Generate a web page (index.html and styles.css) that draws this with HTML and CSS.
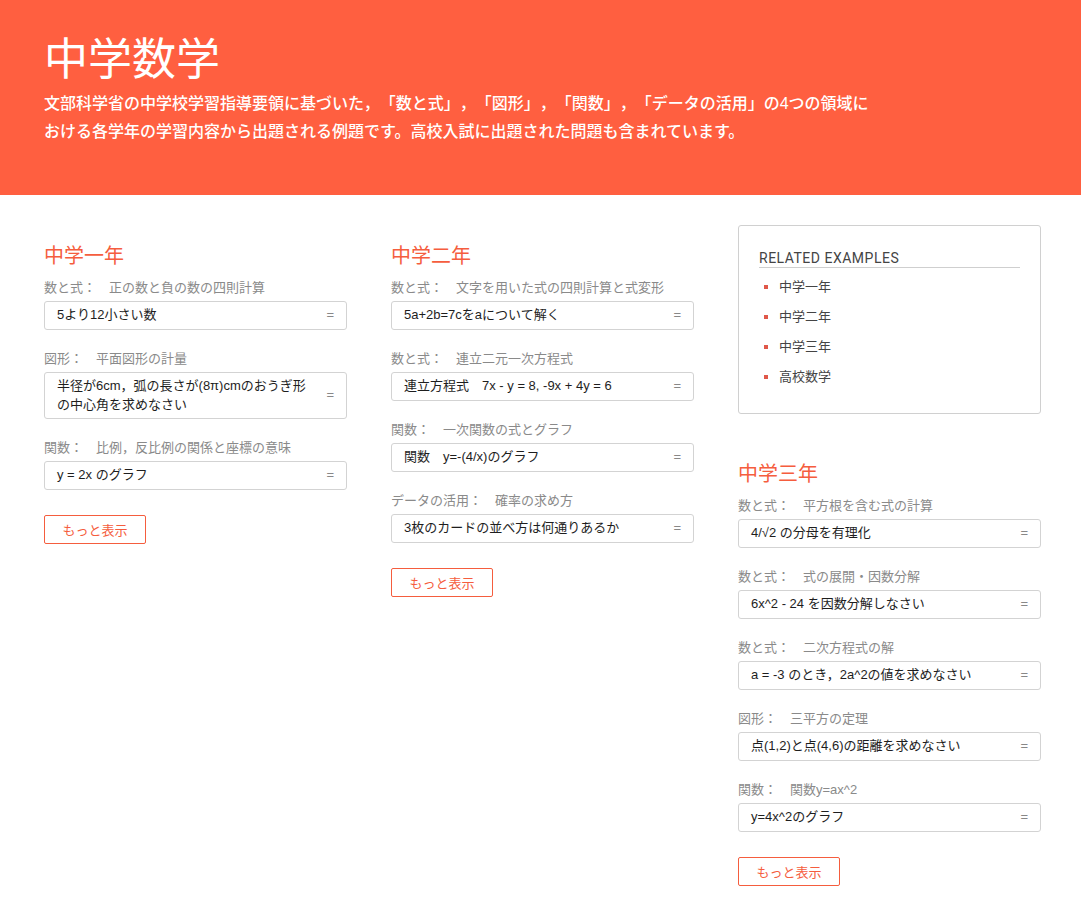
FILE: index.html
```html
<!DOCTYPE html>
<html lang="ja">
<head>
<meta charset="utf-8">
<title>中学数学</title>
<link rel="stylesheet" href="styles.css">
</head>
<body>
<header class="hero">
  <h1 class="hero-title">中学数学</h1>
  <p class="hero-desc">文部科学省の中学校学習指導要領に基づいた，「数と式」，「図形」，「関数」，「データの活用」の4つの領域に<br>おける各学年の学習内容から出題される例題です。高校入試に出題された問題も含まれています。</p>
</header>
<main class="grid">
  <section class="col">
    <h2 class="grade">中学一年</h2>
    <div class="item">
      <div class="label"><span class="cat">数と式：</span>正の数と負の数の四則計算</div>
      <div class="box"><span class="q">5より12小さい数</span><span class="eq">=</span></div>
    </div>
    <div class="item">
      <div class="label"><span class="cat">図形：</span>平面図形の計量</div>
      <div class="box"><span class="q">半径が6cm，弧の長さが(8π)cmのおうぎ形の中心角を求めなさい</span><span class="eq">=</span></div>
    </div>
    <div class="item">
      <div class="label"><span class="cat">関数：</span>比例，反比例の関係と座標の意味</div>
      <div class="box"><span class="q">y = 2x のグラフ</span><span class="eq">=</span></div>
    </div>
    <button class="more">もっと表示</button>
  </section>
  <section class="col">
    <h2 class="grade">中学二年</h2>
    <div class="item">
      <div class="label"><span class="cat">数と式：</span>文字を用いた式の四則計算と式変形</div>
      <div class="box"><span class="q">5a+2b=7cをaについて解く</span><span class="eq">=</span></div>
    </div>
    <div class="item">
      <div class="label"><span class="cat">数と式：</span>連立二元一次方程式</div>
      <div class="box"><span class="q">連立方程式　7x - y = 8, -9x + 4y = 6</span><span class="eq">=</span></div>
    </div>
    <div class="item">
      <div class="label"><span class="cat">関数：</span>一次関数の式とグラフ</div>
      <div class="box"><span class="q">関数　y=-(4/x)のグラフ</span><span class="eq">=</span></div>
    </div>
    <div class="item">
      <div class="label"><span class="cat">データの活用：</span>確率の求め方</div>
      <div class="box"><span class="q">3枚のカードの並べ方は何通りあるか</span><span class="eq">=</span></div>
    </div>
    <button class="more">もっと表示</button>
  </section>
  <section class="col">
    <aside class="related">
      <h3 class="related-title">RELATED EXAMPLES</h3>
      <ul class="related-list">
        <li>中学一年</li>
        <li>中学二年</li>
        <li>中学三年</li>
        <li>高校数学</li>
      </ul>
    </aside>
    <h2 class="grade">中学三年</h2>
    <div class="item">
      <div class="label"><span class="cat">数と式：</span>平方根を含む式の計算</div>
      <div class="box"><span class="q">4/√2 の分母を有理化</span><span class="eq">=</span></div>
    </div>
    <div class="item">
      <div class="label"><span class="cat">数と式：</span>式の展開・因数分解</div>
      <div class="box"><span class="q">6x^2 - 24 を因数分解しなさい</span><span class="eq">=</span></div>
    </div>
    <div class="item">
      <div class="label"><span class="cat">数と式：</span>二次方程式の解</div>
      <div class="box"><span class="q">a = -3 のとき，2a^2の値を求めなさい</span><span class="eq">=</span></div>
    </div>
    <div class="item">
      <div class="label"><span class="cat">図形：</span>三平方の定理</div>
      <div class="box"><span class="q">点(1,2)と点(4,6)の距離を求めなさい</span><span class="eq">=</span></div>
    </div>
    <div class="item">
      <div class="label"><span class="cat">関数：</span>関数y=ax^2</div>
      <div class="box"><span class="q">y=4x^2のグラフ</span><span class="eq">=</span></div>
    </div>
    <button class="more">もっと表示</button>
  </section>
</main>
</body>
</html>
```
FILE: styles.css
```css
* { box-sizing: border-box; }
html, body { margin: 0; padding: 0; }
body {
  background: #fff;
  font-family: "Liberation Sans", "Noto Sans CJK JP", sans-serif;
  color: #222;
  text-spacing-trim: space-all;
}
.hero {
  background: #ff5f40;
  color: #fff;
  padding: 30px 44px 49px;
  height: 195px;
}
.hero-title {
  margin: 0;
  font-size: 44px;
  line-height: 53px;
  font-weight: 400;
  font-family: "Noto Sans CJK JP", sans-serif;
}
.hero-desc {
  margin: 7px 0 0;
  font-size: 16px;
  line-height: 28px;
  font-weight: 500;
  white-space: nowrap;
}
.grid {
  display: grid;
  grid-template-columns: 303px 303px 303px;
  column-gap: 44px;
  padding: 30px 0 0 44px;
  align-items: start;
}
.col { display: flex; flex-direction: column; align-items: stretch; }
.grade {
  margin: 16px 0 9px;
  font-size: 20px;
  line-height: 28px;
  font-weight: 400;
  color: #f55d3e;
  font-family: "Noto Sans CJK JP", sans-serif;
}
.item { margin-bottom: 19px; }
.label {
  font-size: 13px;
  line-height: 20px;
  color: #8a8a8a;
  margin-bottom: 3px;
}
.cat { margin-right: 13px; }
.box {
  display: flex;
  align-items: center;
  border: 1px solid #d3d3d3;
  border-radius: 3px;
  padding: 4px 12px;
  font-size: 13px;
  line-height: 18.5px;
  color: #1e1e1e;
  min-height: 29px;
}
.q { flex: 1; }
.eq {
  width: 10px;
  margin-left: 16px;
  text-align: right;
  color: #888;
}
.more {
  align-self: flex-start;
  margin-top: 6px;
  width: 102px;
  height: 29px;
  background: #fff;
  border: 1px solid #f55d3e;
  border-radius: 2px;
  color: #f55d3e;
  font-family: "Liberation Sans", "Noto Sans CJK JP", sans-serif;
  font-size: 13px;
  padding: 0;
}
.related {
  border: 1px solid #d0d0d0;
  border-radius: 3px;
  padding: 23px 20px 21px;
  margin-bottom: 29px;
}
.related-title {
  margin: 0;
  font-family: Roboto, "Liberation Sans", sans-serif;
  font-size: 14px;
  line-height: 18px;
  font-weight: 400;
  letter-spacing: 0.5px;
  color: #444;
  border-bottom: 1px solid #cfcfcf;
}
.related-list {
  list-style: none;
  margin: 4px 0 0;
  padding: 0;
}
.related-list li {
  position: relative;
  padding-left: 20px;
  font-size: 13px;
  line-height: 30px;
  color: #444;
}
.related-list li::before {
  content: "";
  position: absolute;
  left: 5px;
  top: 13px;
  width: 4px;
  height: 4px;
  background: #e0584a;
}
```
